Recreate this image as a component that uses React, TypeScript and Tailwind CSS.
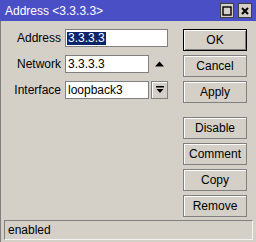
import React from 'react';

const font = { fontFamily: '"Liberation Sans", Arial, sans-serif' };

const Btn = ({ label, primary }: { label: string; primary?: boolean }) => (
  <button
    className={`h-[22px] w-[64px] bg-[#d4d0c8] text-[12px] text-black flex items-center justify-center border ${
      primary ? 'border-black shadow-[inset_1px_1px_0_#ffffff,inset_-1px_-1px_0_#808080]' : 'border-[#808080] shadow-[inset_1px_1px_0_#ffffff]'
    }`}
  >
    {label}
  </button>
);

const Row = ({ label, children }: { label: string; children: React.ReactNode }) => (
  <div className="flex items-center h-[18px]">
    <span className="w-[61px] pr-[1px] text-right text-[12px] text-black whitespace-nowrap overflow-hidden">{label}</span>
    <div className="ml-[3px] flex items-center">{children}</div>
  </div>
);

export default function App() {
  return (
    <div className="w-[256px] h-[242px] bg-[#d4d0c8] flex flex-col border-l border-[#808080]" style={font}>
      {/* title bar */}
      <div className="h-[21px] bg-[#4b4fc5] flex items-center pl-[5px] pr-[4px] -ml-px">
        <span className="text-white text-[12px] flex-1">Address &lt;3.3.3.3&gt;</span>
        <div className="flex gap-[4px]">
          <div className="w-[14px] h-[15px] bg-[#d4d0c8] border border-[#404040] flex items-center justify-center">
            <svg width="10" height="10" viewBox="0 0 10 10">
              <rect x="1" y="1" width="8" height="8" fill="none" stroke="#000" strokeWidth="1.4" />
            </svg>
          </div>
          <div className="w-[14px] h-[15px] bg-[#d4d0c8] border border-[#404040] flex items-center justify-center">
            <svg width="8" height="8" viewBox="0 0 8 8">
              <path d="M1 1L7 7M7 1L1 7" stroke="#000" strokeWidth="2" />
            </svg>
          </div>
        </div>
      </div>

      <div className="flex-1 flex pt-[8px]">
        {/* form */}
        <div className="w-[182px] flex flex-col gap-[8px]">
          <Row label="Address">
            <div className="w-[103px] h-[18px] bg-white border border-[#808080] flex items-center pl-[1px]">
              <span className="bg-[#0a246a] text-white text-[12px] leading-[13px] px-[1px]">3.3.3.3</span>
            </div>
          </Row>
          <Row label="Network">
            <div className="w-[84px] h-[18px] bg-white border border-[#808080] flex items-center pl-[2px] text-[12px]">
              3.3.3.3
            </div>
            <svg className="ml-[6px]" width="9" height="6" viewBox="0 0 9 6">
              <path d="M0 5.5L4.5 0.5L9 5.5Z" fill="#000" />
            </svg>
          </Row>
          <Row label="Interface">
            <div className="w-[84px] h-[18px] bg-white border border-[#808080] flex items-center pl-[2px] text-[12px]">
              loopback3
            </div>
            <div className="ml-[2px] w-[17px] h-[18px] border border-[#808080] shadow-[inset_1px_1px_0_#ffffff] flex items-center justify-center">
              <svg width="8" height="8" viewBox="0 0 8 8">
                <rect x="0" y="0" width="8" height="1.5" fill="#000" />
                <path d="M0.5 3L7.5 3L4 7Z" fill="#000" />
              </svg>
            </div>
          </Row>
        </div>

        {/* buttons */}
        <div className="flex flex-col gap-[4px]">
          <Btn label="OK" primary />
          <Btn label="Cancel" />
          <Btn label="Apply" />
          <div className="h-[6px]" />
          <Btn label="Disable" />
          <Btn label="Comment" />
          <Btn label="Copy" />
          <Btn label="Remove" />
        </div>
      </div>

      {/* status bar */}
      <div className="mx-[3px] mb-[2px] h-[20px] border border-t-[#808080] border-l-[#808080] border-b-[#f4f4f4] border-r-[#f4f4f4] flex items-center pl-[3px] text-[12px] text-black">
        enabled
      </div>
    </div>
  );
}
